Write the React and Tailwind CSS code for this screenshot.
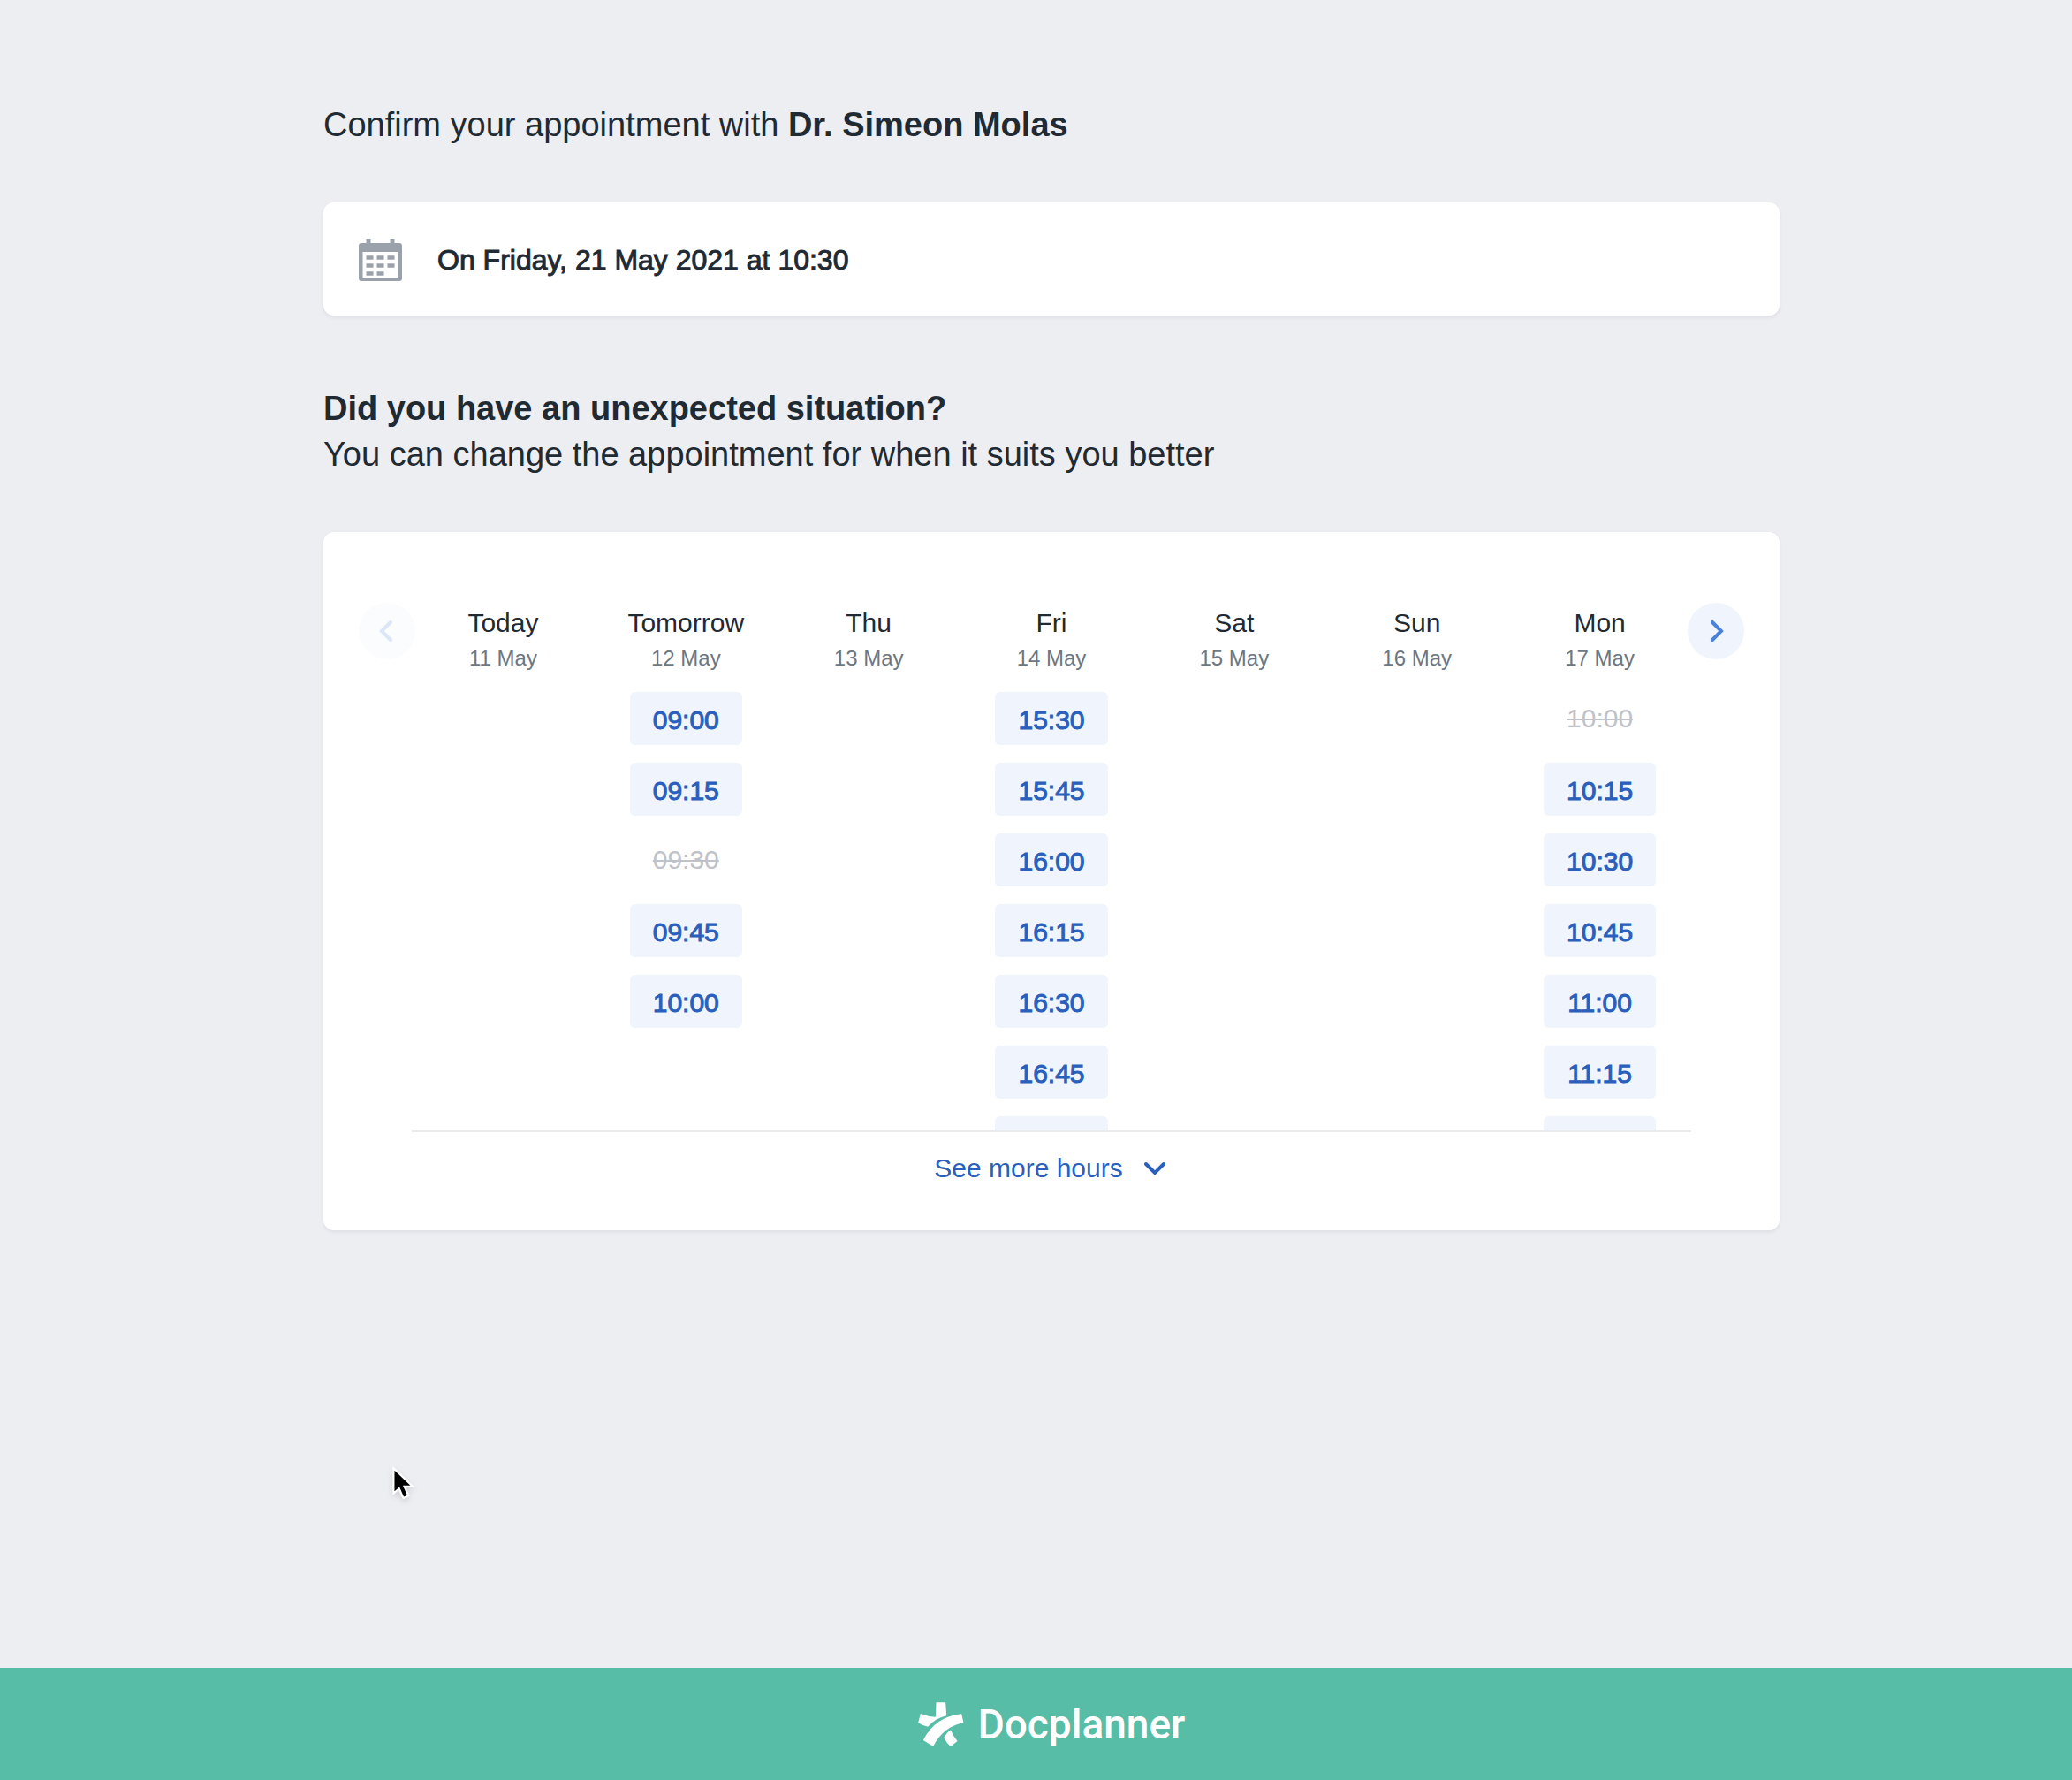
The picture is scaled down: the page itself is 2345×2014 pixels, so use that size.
const days = [
  { name: 'Today', date: '11 May', slots: [] },
  {
    name: 'Tomorrow',
    date: '12 May',
    slots: ['09:00', '09:15', '09:30', '09:45', '10:00'],
    taken: '09:30',
  },
  { name: 'Thu', date: '13 May', slots: [] },
  {
    name: 'Fri',
    date: '14 May',
    slots: ['15:30', '15:45', '16:00', '16:15', '16:30', '16:45'],
    hasMore: true,
  },
  { name: 'Sat', date: '15 May', slots: [] },
  { name: 'Sun', date: '16 May', slots: [] },
  {
    name: 'Mon',
    date: '17 May',
    slots: ['10:00', '10:15', '10:30', '10:45', '11:00', '11:15'],
    taken: '10:00',
    hasMore: true,
  },
];

function CalendarIcon() {
  return (
    <svg className="h-12 w-[49px] shrink-0" viewBox="0 0 49 48" fill="#9aa1ab" aria-hidden="true">
      <path d="M8.5 0h5v6h-5zM35.5 0h5v6h-5z" />
      <path
        fillRule="evenodd"
        d="M3 5h43a3 3 0 0 1 3 3v37a3 3 0 0 1-3 3H3a3 3 0 0 1-3-3V8a3 3 0 0 1 3-3zM4.500 15v29h40V15z"
      />
      <path d="M8.500 19.300h8v4.500h-8zM20.500 19.300h8v4.500h-8zM32.500 19.300h8v4.500h-8zM8.500 28.300h8v4.500h-8zM20.500 28.300h8v4.500h-8zM32.500 28.300h8v4.500h-8zM8.500 37.300h8v4.500h-8zM20.500 37.300h8v4.500h-8z" />
    </svg>
  );
}

function Chevron({ d, className }) {
  return (
    <svg
      className={className}
      viewBox="0 0 24 24"
      fill="none"
      stroke="currentColor"
      strokeWidth="4"
      strokeLinecap="round"
      strokeLinejoin="miter"
      aria-hidden="true"
    >
      <path d={d} />
    </svg>
  );
}

function LogoMark() {
  return (
    <svg className="h-[50px] w-[52px] shrink-0" viewBox="60 170 155 150" fill="#fff" aria-hidden="true">
      <path d="M121 171h32l3 45q-20 5-37 14z" />
      <path d="M68 209q24 10 52 11l0 10q-15 9-27 23-17-3-33-13z" />
      <path d="M77 299Q117 219 207 210L214 240Q146 252 111 320z" />
      <path d="M170 264q8 20 23 38l-23 18q-14-12-23-29 9-17 23-27z" />
    </svg>
  );
}

function Pointer() {
  return (
    <svg
      className="pointer-events-none absolute top-[1658px] left-[443px] h-[40px] w-[28px] drop-shadow-md"
      viewBox="0 0 26 38"
      aria-hidden="true"
    >
      <path
        d="M2 3v27l6-5 4.500 10 5.500-2.500-4.500-10h9z"
        fill="#000"
        stroke="#fff"
        strokeWidth="2"
      />
    </svg>
  );
}

function DayColumn({ day }) {
  return (
    <div className="flex flex-col items-center">
      <h3 className="text-[30px] leading-10">{day.name}</h3>
      <p className="text-2xl leading-10 text-[#6c7782]">{day.date}</p>
      <ul className="mt-[18px] flex flex-col gap-5">
        {day.slots.map((time) => (
          <li key={time}>
            {time === day.taken ? (
              <s className="flex h-[60px] items-center justify-center px-[26px] pb-0.5 text-[30px] text-[#bfc2c8] decoration-2">
                {time}
              </s>
            ) : (
              <button
                type="button"
                className="flex h-[60px] w-full items-center justify-center rounded-md bg-[#eff4fd] px-[26px] pt-0.5 text-[30px] text-[#2a5fbb] [-webkit-text-stroke:1px]"
              >
                {time}
              </button>
            )}
          </li>
        ))}
        {day.hasMore && <li aria-hidden="true" className="h-4 rounded-t-md bg-[#eff4fd]" />}
      </ul>
    </div>
  );
}

export default function App() {
  return (
    <div className="relative flex min-h-screen flex-col bg-[#edeef2] font-['Liberation_Sans',Arial,sans-serif] text-[#1f2a33]">
      <main className="w-full pt-[115px] pl-[35px]">
        <div className="mx-auto max-w-[1648px]">
          <h1 className="text-[38px] leading-[52px]">
            Confirm your appointment with <strong>Dr. Simeon Molas</strong>
          </h1>

          <section className="mt-[62px] flex h-32 items-center gap-10 rounded-xl bg-white px-10 pt-0.5 shadow-[0_2px_4px_rgba(30,40,60,0.08)]">
            <CalendarIcon />
            <p className="text-[32px] leading-10 [-webkit-text-stroke:1px]">
              On Friday, 21 May 2021 at 10:30
            </p>
          </section>

          <div className="mt-[79px] text-[38px] leading-[52px]">
            <h2 className="font-bold">Did you have an unexpected situation?</h2>
            <p>You can change the appointment for when it suits you better</p>
          </div>

          <section className="mt-[62px] rounded-xl bg-white px-10 pt-20 pb-[50px] shadow-[0_2px_4px_rgba(30,40,60,0.08)]">
            <div className="flex items-start">
              <button
                type="button"
                disabled
                aria-label="Previous days"
                className="-mr-1 flex size-16 shrink-0 items-center justify-center rounded-full bg-[#fbfcfe] text-[#dbe6f8]"
              >
                <Chevron className="size-6" d="M16 2L6 12l10 10" />
              </button>
              <div className="grid flex-1 grid-cols-7 border-b-2 border-[#e9ebef] pt-[3px]">
                {days.map((day) => (
                  <DayColumn key={day.name} day={day} />
                ))}
              </div>
              <button
                type="button"
                aria-label="Next days"
                className="-ml-1 flex size-16 shrink-0 items-center justify-center rounded-full bg-[#eff4fd] text-[#4a81d9]"
              >
                <Chevron className="size-6" d="M8 2l10 10L8 22" />
              </button>
            </div>
            <button
              type="button"
              className="mx-auto mt-[21px] flex items-center gap-6 pr-1 text-[30px] leading-10 text-[#2a5fbb]"
            >
              See more hours
              <Chevron className="size-6" d="M2 7l10 10L22 7" />
            </button>
          </section>
        </div>
      </main>

      <footer className="mt-auto flex h-[127px] items-center justify-center gap-4 bg-[#58bda7] pl-[35px]">
        <LogoMark />
        <span className="font-['Roboto','Noto_Sans',sans-serif] text-[46px] leading-none font-medium text-white">
          Docplanner
        </span>
      </footer>
      <Pointer />
    </div>
  );
}
